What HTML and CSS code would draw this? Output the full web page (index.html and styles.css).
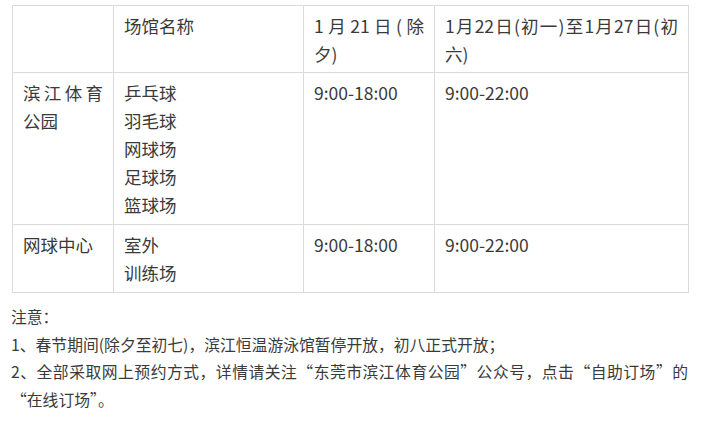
FILE: index.html
```html
<!DOCTYPE html>
<html lang="zh-CN">
<head>
<meta charset="utf-8">
<title>场馆开放时间</title>
<link rel="stylesheet" href="styles.css">
</head>
<body>
<div class="page">
  <table class="hours">
    <colgroup>
      <col class="c1"><col class="c2"><col class="c3"><col class="c4">
    </colgroup>
    <tr class="head">
      <td></td>
      <td>场馆名称</td>
      <td>1月21日(除夕)</td>
      <td>1月22日(初一)至1月27日(初六)</td>
    </tr>
    <tr>
      <td>滨江体育公园</td>
      <td>乒乓球<br>羽毛球<br>网球场<br>足球场<br>篮球场</td>
      <td>9:00-18:00</td>
      <td>9:00-22:00</td>
    </tr>
    <tr>
      <td>网球中心</td>
      <td>室外<br>训练场</td>
      <td>9:00-18:00</td>
      <td>9:00-22:00</td>
    </tr>
  </table>
  <div class="notes">
    <p>注意：</p>
    <p>1、春节期间(除夕至初七)，滨江恒温游泳馆暂停开放，初八正式开放；</p>
    <p>2、全部采取网上预约方式，详情请关注“东莞市滨江体育公园”公众号，点击“自助订场”的“在线订场”。</p>
  </div>
</div>
</body>
</html>
```

FILE: styles.css
```css
html, body {
  margin: 0;
  padding: 0;
  background: #ffffff;
}

body {
  font-family: "Noto Sans CJK SC", sans-serif;
  color: #3a3a3a;
}

.page {
  padding: 5px 0 0 12px;
  width: 676px;
}

.hours {
  border-collapse: collapse;
  table-layout: fixed;
  width: 676px;
  font-size: 17.5px;
  line-height: 28px;
}

.hours .c1 { width: 101px; }
.hours .c2 { width: 190px; }
.hours .c3 { width: 131px; }
.hours .c4 { width: 254px; }

.hours td {
  border: 1px solid #dadada;
  padding: 6px 10px 5px 10px;
  vertical-align: top;
  text-align: justify;
}

.hours .head td {
  padding-bottom: 4px;
}

.notes {
  margin-top: 10px;
  margin-left: -1px;
  font-size: 15.8px;
  line-height: 27.5px;
  text-align: justify;
}

.notes p {
  margin: 0;
}
```
